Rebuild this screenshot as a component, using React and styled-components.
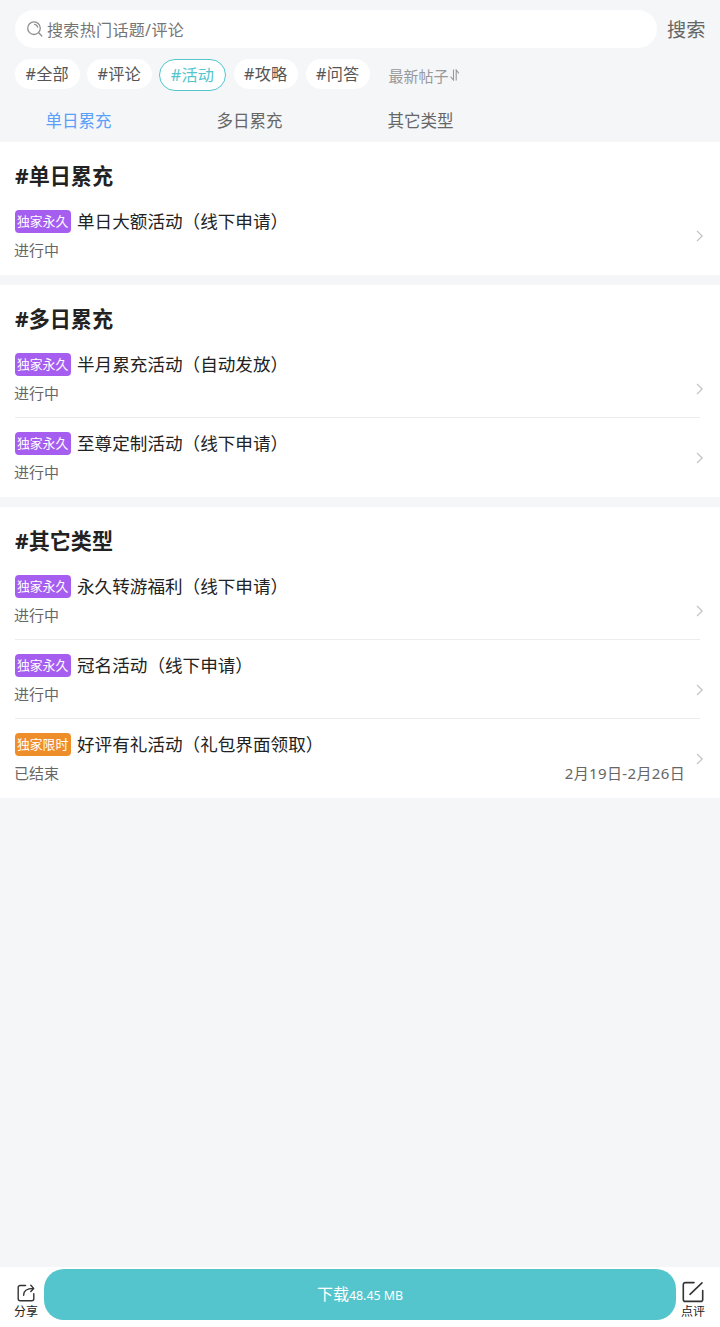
import { useState } from "react";
import styled, { createGlobalStyle } from "styled-components";

const TOPICS = ["全部", "评论", "活动", "攻略", "问答"];

const SECTIONS = [
  {
    title: "单日累充",
    items: [{ tag: "独家永久", title: "单日大额活动（线下申请）", status: "进行中" }],
  },
  {
    title: "多日累充",
    items: [
      { tag: "独家永久", title: "半月累充活动（自动发放）", status: "进行中" },
      { tag: "独家永久", title: "至尊定制活动（线下申请）", status: "进行中" },
    ],
  },
  {
    title: "其它类型",
    items: [
      { tag: "独家永久", title: "永久转游福利（线下申请）", status: "进行中" },
      { tag: "独家永久", title: "冠名活动（线下申请）", status: "进行中" },
      {
        tag: "独家限时",
        limited: true,
        title: "好评有礼活动（礼包界面领取）",
        status: "已结束",
        date: "2月19日-2月26日",
      },
    ],
  },
];

function App() {
  const [topic, setTopic] = useState("活动");
  const [tab, setTab] = useState("单日累充");

  return (
    <Page>
      <GlobalStyle />
      <SearchBar>
        <SearchField>
          <SearchIcon />
          <SearchInput placeholder="搜索热门话题/评论" />
        </SearchField>
        <SearchButton>搜索</SearchButton>
      </SearchBar>

      <TopicRow>
        {TOPICS.map((name) => (
          <Topic key={name} $active={name === topic} onClick={() => setTopic(name)}>
            #{name}
          </Topic>
        ))}
        <SortButton>
          最新帖子
          <SortIcon />
        </SortButton>
      </TopicRow>

      <TabRow>
        {SECTIONS.map(({ title }) => (
          <Tab key={title} $active={title === tab} onClick={() => setTab(title)}>
            {title}
          </Tab>
        ))}
      </TabRow>

      <SectionList>
        {SECTIONS.map((section) => (
          <Section key={section.title}>
            <SectionTitle>#{section.title}</SectionTitle>
            {section.items.map((item) => (
              <Item key={item.title}>
                <ItemBody>
                  <ItemHead>
                    <Tag $limited={item.limited}>{item.tag}</Tag>
                    <ItemTitle>{item.title}</ItemTitle>
                  </ItemHead>
                  <ItemMeta>
                    <span>{item.status}</span>
                    <ItemDate>{item.date}</ItemDate>
                  </ItemMeta>
                </ItemBody>
                <ArrowIcon />
              </Item>
            ))}
          </Section>
        ))}
      </SectionList>

      <BottomBar>
        <ShareButton>
          <ShareIcon />
          分享
        </ShareButton>
        <DownloadButton>
          下载<FileSize>48.45 MB</FileSize>
        </DownloadButton>
        <ReviewButton>
          <ReviewIcon />
          点评
        </ReviewButton>
      </BottomBar>
    </Page>
  );
}

export default App;

function SearchIcon() {
  return (
    <svg width="16" height="16" viewBox="0 0 16 16" fill="none" stroke="#8f8f8f" strokeWidth="1.3" strokeLinecap="round">
      <circle cx="7" cy="7.2" r="6.3" />
      <path d="M12 12l2.8 3M7.6 3.4a4 4 0 0 1 3.1 2.8" />
    </svg>
  );
}

function SortIcon() {
  return (
    <svg width="11" height="12" viewBox="0 0 11 12" fill="none" stroke="#999" strokeWidth="1.1">
      <path d="M4.5 0.5v10.5L1.6 7.7M7.2 11.5V1l2.6 3.3" />
    </svg>
  );
}

function ShareIcon() {
  return (
    <svg width="18" height="18" viewBox="0 0 18 18" fill="none" stroke="#333" strokeWidth="1.4" strokeLinecap="round" strokeLinejoin="round">
      <path d="M8.6 1.5H3.2a2 2 0 0 0-2 2v11.3a2 2 0 0 0 2 2h11.6a2 2 0 0 0 2-2V9.8" />
      <path d="M6.6 11.2c0-4 2.7-6.8 9.8-6.8M13.8 1.2l2.9 3.2-2.9 3" />
    </svg>
  );
}

function ReviewIcon() {
  return (
    <svg width="22" height="22" viewBox="0 0 22 22" fill="none" stroke="#333" strokeWidth="1.6" strokeLinecap="round" strokeLinejoin="round">
      <path d="M12 1.6H3.3a2 2 0 0 0-2 2v14.8a2 2 0 0 0 2 2h15.4a2 2 0 0 0 2-2V9.5" />
      <path d="M8 13.3L20 1.8" />
    </svg>
  );
}

function ArrowIcon() {
  return (
    <Arrow width="8" height="12" viewBox="0 0 8 12" fill="none" stroke="#c4c4c4" strokeWidth="1.2">
      <path d="M1 1l5.2 5L1 11" />
    </Arrow>
  );
}

const GlobalStyle = createGlobalStyle`
  * {
    box-sizing: border-box;
  }

  body {
    margin: 0;
    background: #f4f6f8;
    font-family: "Noto Sans", "Noto Sans CJK SC", sans-serif;
    color: #222;
  }

  button,
  input {
    border: none;
    padding: 0;
    background: none;
    font-family: inherit;
    white-space: nowrap;
  }
`;

const Page = styled.div`
  display: flex;
  flex-direction: column;
  min-height: 100vh;
`;

const SearchBar = styled.div`
  display: flex;
  align-items: center;
  gap: 10px;
  padding: 10px 15px 0;
`;

const SearchField = styled.div`
  display: flex;
  flex: 1;
  align-items: center;
  gap: 4px;
  height: 38px;
  padding: 0 12px;
  border-radius: 19px;
  background: #fff;
`;

const SearchInput = styled.input`
  flex: 1;
  height: 36px;
  padding-top: 2px;
  font-size: 16px;
  letter-spacing: 0.35px;
  outline: none;

  &::placeholder {
    color: #757575;
  }
`;

const SearchButton = styled.button`
  width: 38px;
  padding-top: 2px;
  font-size: 19.2px;
  line-height: 36px;
  color: #666;
`;

const TopicRow = styled.div`
  display: flex;
  align-items: flex-start;
  gap: 7.5px;
  height: 43px;
  padding: 11px 15px 0;
`;

const Topic = styled.button`
  width: ${({ $active }) => ($active ? "67px" : "64.5px")};
  height: ${({ $active }) => ($active ? "32px" : "30px")};
  border: ${({ $active }) => ($active ? "1px solid #54c5cd" : "none")};
  border-radius: 16px;
  background: #fff;
  font-size: 16.2px;
  line-height: 30px;
  letter-spacing: 0.2px;
  color: ${({ $active }) => ($active ? "#54c5cd" : "#555")};
`;

const SortButton = styled.button`
  display: flex;
  align-items: center;
  height: 32px;
  margin-left: 11px;
  font-size: 15px;
  color: #999;
`;

const TabRow = styled.div`
  display: flex;
  height: 51px;
`;

const Tab = styled.button`
  width: 171px;
  padding: 6px 14px 0 0;
  font-size: 16.5px;
  color: ${({ $active }) => ($active ? "#5a9ff8" : "#666")};
`;

const SectionList = styled.main`
  display: flex;
  flex: 1;
  flex-direction: column;
  gap: 10px;
`;

const Section = styled.section`
  background: #fff;
`;

const SectionTitle = styled.h2`
  height: 54px;
  margin: 0;
  padding: 18px 15px 0;
  font-size: 21.1px;
  font-weight: 700;
  line-height: 32px;
`;

const Arrow = styled.svg`
  flex-shrink: 0;
  align-self: center;
  margin-right: -4px;
`;

const Item = styled.div`
  display: flex;
  align-items: flex-start;
  height: 79px;
  margin: 0 20px 0 15px;

  &:not(:last-child) {
    border-bottom: 1px solid #ededed;
  }

  &:not(:last-child) ${Arrow} {
    margin-top: 22px;
  }
`;

const ItemBody = styled.div`
  flex: 1;
  padding-top: 14px;
`;

const ItemHead = styled.div`
  display: flex;
  align-items: center;
  gap: 6px;
  height: 23px;
`;

const Tag = styled.span`
  width: 56px;
  height: 23px;
  padding-left: 2px;
  border-radius: 4px;
  background: ${({ $limited }) => ($limited ? "#ee8e2b" : "#a65ef0")};
  font-size: 12.8px;
  line-height: 22px;
  color: #fff;
`;

const ItemTitle = styled.span`
  font-size: 17.6px;
  line-height: 23px;
`;

const ItemMeta = styled.div`
  display: flex;
  justify-content: space-between;
  margin-left: -1px;
  padding: 6px 11px 0 0;
  font-size: 15px;
  line-height: 23px;
  color: #666;
`;

const ItemDate = styled.span`
  letter-spacing: 0.36px;
`;

const BottomBar = styled.footer`
  display: flex;
  height: 60px;
  padding: 2px 14px 7px;
  background: #fff;
`;

const BarAction = styled.button`
  display: flex;
  flex-direction: column;
  justify-content: flex-end;
  width: 30px;
  font-size: 12px;
  line-height: 16px;
  color: #222;
`;

const ShareButton = styled(BarAction)`
  align-items: flex-start;

  svg {
    margin: 0 0 2px 3px;
  }
`;

const ReviewButton = styled(BarAction)`
  align-items: flex-end;
  padding-right: 1px;

  svg {
    margin: 0 1px 1px 0;
  }
`;

const DownloadButton = styled.button`
  flex: 1;
  padding-bottom: 4px;
  border-radius: 20px;
  background: #54c5cd;
  font-size: 16px;
  color: #fff;
`;

const FileSize = styled.span`
  font-size: 12.4px;
`;
